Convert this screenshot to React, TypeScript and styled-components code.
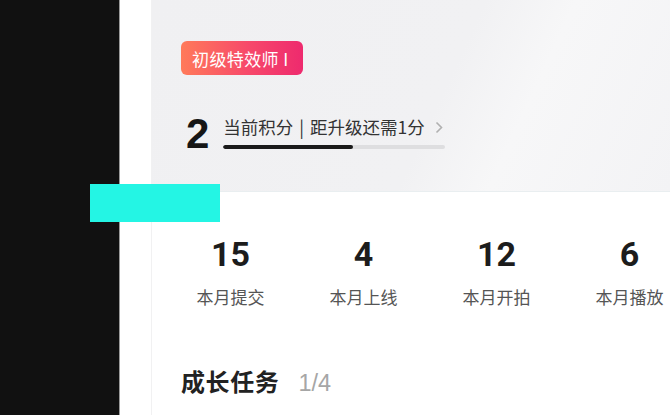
import React from "react";
import styled, { createGlobalStyle } from "styled-components";

const GlobalStyle = createGlobalStyle`
  html, body { margin: 0; padding: 0; background: #ffffff; }
  body { font-family: "Noto Sans CJK SC", "Noto Sans", sans-serif; }
`;

const Page = styled.div`
  position: relative;
  display: flex;
  width: 670px;
  height: 415px;
  overflow: hidden;
  background: #ffffff;
`;

const Sidebar = styled.div`
  flex: 0 0 120px;
  background: #111111;
  border-right: 1px solid #9a9a9a;
  box-sizing: border-box;
`;

const Gutter = styled.div`
  flex: 0 0 31px;
  background: #ffffff;
  border-right: 1px solid #f1f1f2;
`;

const Card = styled.div`
  flex: 1 1 auto;
  display: flex;
  flex-direction: column;
  min-width: 0;
`;

const Header = styled.div`
  height: 192px;
  box-sizing: border-box;
  padding: 41px 0 0 29px;
  display: flex;
  flex-direction: column;
  align-items: flex-start;
  background: linear-gradient(115deg, #f0f0f2 0%, #f1f1f3 55%, #f7f7f8 70%, #f3f3f5 100%);
  border-bottom: 1px solid #e9eef0;
`;

const Badge = styled.div`
  height: 34px;
  padding: 0 14px 0 11px;
  display: flex;
  align-items: center;
  border-radius: 6px;
  background: linear-gradient(90deg, #ff7a5a 0%, #f7496a 55%, #ee2a6e 100%);
  color: #ffffff;
  font-size: 17px;
  letter-spacing: 0.4px;
`;

const ScoreRow = styled.div`
  margin-top: 38px;
  padding-left: 5px;
  display: flex;
  align-items: flex-start;
  gap: 14px;
`;

const ScoreValue = styled.div`
  font-family: "Liberation Sans", Arial, sans-serif;
  font-weight: 700;
  font-size: 42px;
  line-height: 42px;
  color: #161616;
`;

const ScoreInfo = styled.div`
  display: flex;
  flex-direction: column;
  width: 222px;
  padding-top: 3px;
`;

const ScoreText = styled.div`
  display: flex;
  align-items: center;
  font-size: 17.5px;
  line-height: 22px;
  color: #333333;
  white-space: nowrap;
`;

const Divider = styled.span`
  margin: 0 6px;
  color: #333333;
`;

const Chevron = styled.svg`
  margin-left: 10px;
  flex: none;
`;

const Progress = styled.div`
  margin-top: 7px;
  height: 4px;
  border-radius: 2px;
  background: #dedee0;
  overflow: hidden;
`;

const ProgressFill = styled.div`
  height: 100%;
  border-radius: 2px;
  background: #1a1a1a;
`;

const Stats = styled.div`
  display: grid;
  grid-template-columns: repeat(4, 133px);
  margin: 44px 0 0 12px;
`;

const Stat = styled.div`
  display: flex;
  flex-direction: column;
  align-items: center;
`;

const StatValue = styled.div`
  font-family: Roboto, "Liberation Sans", sans-serif;
  font-weight: 700;
  font-size: 34px;
  line-height: 36px;
  color: #1c1c1c;
`;

const StatLabel = styled.div`
  margin-top: 14px;
  font-size: 17px;
  line-height: 22px;
  color: #555555;
`;

const TaskTitle = styled.div`
  display: flex;
  align-items: baseline;
  gap: 19px;
  margin: 55px 0 0 29px;
`;

const TaskName = styled.div`
  font-size: 24px;
  font-weight: 700;
  color: #222222;
  letter-spacing: 0.6px;
`;

const TaskCount = styled.div`
  font-family: "Liberation Sans", Arial, sans-serif;
  font-size: 23.5px;
  color: #a6a6a6;
`;

const CyanBar = styled.div`
  position: absolute;
  left: 90px;
  top: 184px;
  width: 130px;
  height: 38px;
  background: #24f5e4;
`;

const stats = [
  { value: "15", label: "本月提交" },
  { value: "4", label: "本月上线" },
  { value: "12", label: "本月开拍" },
  { value: "6", label: "本月播放" },
];

export default function App() {
  const progress = 0.585;
  return (
    <>
      <GlobalStyle />
      <Page>
        <Sidebar />
        <Gutter />
        <Card>
          <Header>
            <Badge>初级特效师 I</Badge>
            <ScoreRow>
              <ScoreValue>2</ScoreValue>
              <ScoreInfo>
                <ScoreText>
                  当前积分<Divider>|</Divider>距升级还需1分
                  <Chevron width="8" height="13" viewBox="0 0 8 13">
                    <path d="M1.5 1.5 L6.5 6.5 L1.5 11.5" fill="none" stroke="#b0b0b0" strokeWidth="1.6" />
                  </Chevron>
                </ScoreText>
                <Progress>
                  <ProgressFill style={{ width: `${progress * 100}%` }} />
                </Progress>
              </ScoreInfo>
            </ScoreRow>
          </Header>
          <Stats>
            {stats.map((s) => (
              <Stat key={s.label}>
                <StatValue>{s.value}</StatValue>
                <StatLabel>{s.label}</StatLabel>
              </Stat>
            ))}
          </Stats>
          <TaskTitle>
            <TaskName>成长任务</TaskName>
            <TaskCount>1/4</TaskCount>
          </TaskTitle>
        </Card>
        <CyanBar />
      </Page>
    </>
  );
}
